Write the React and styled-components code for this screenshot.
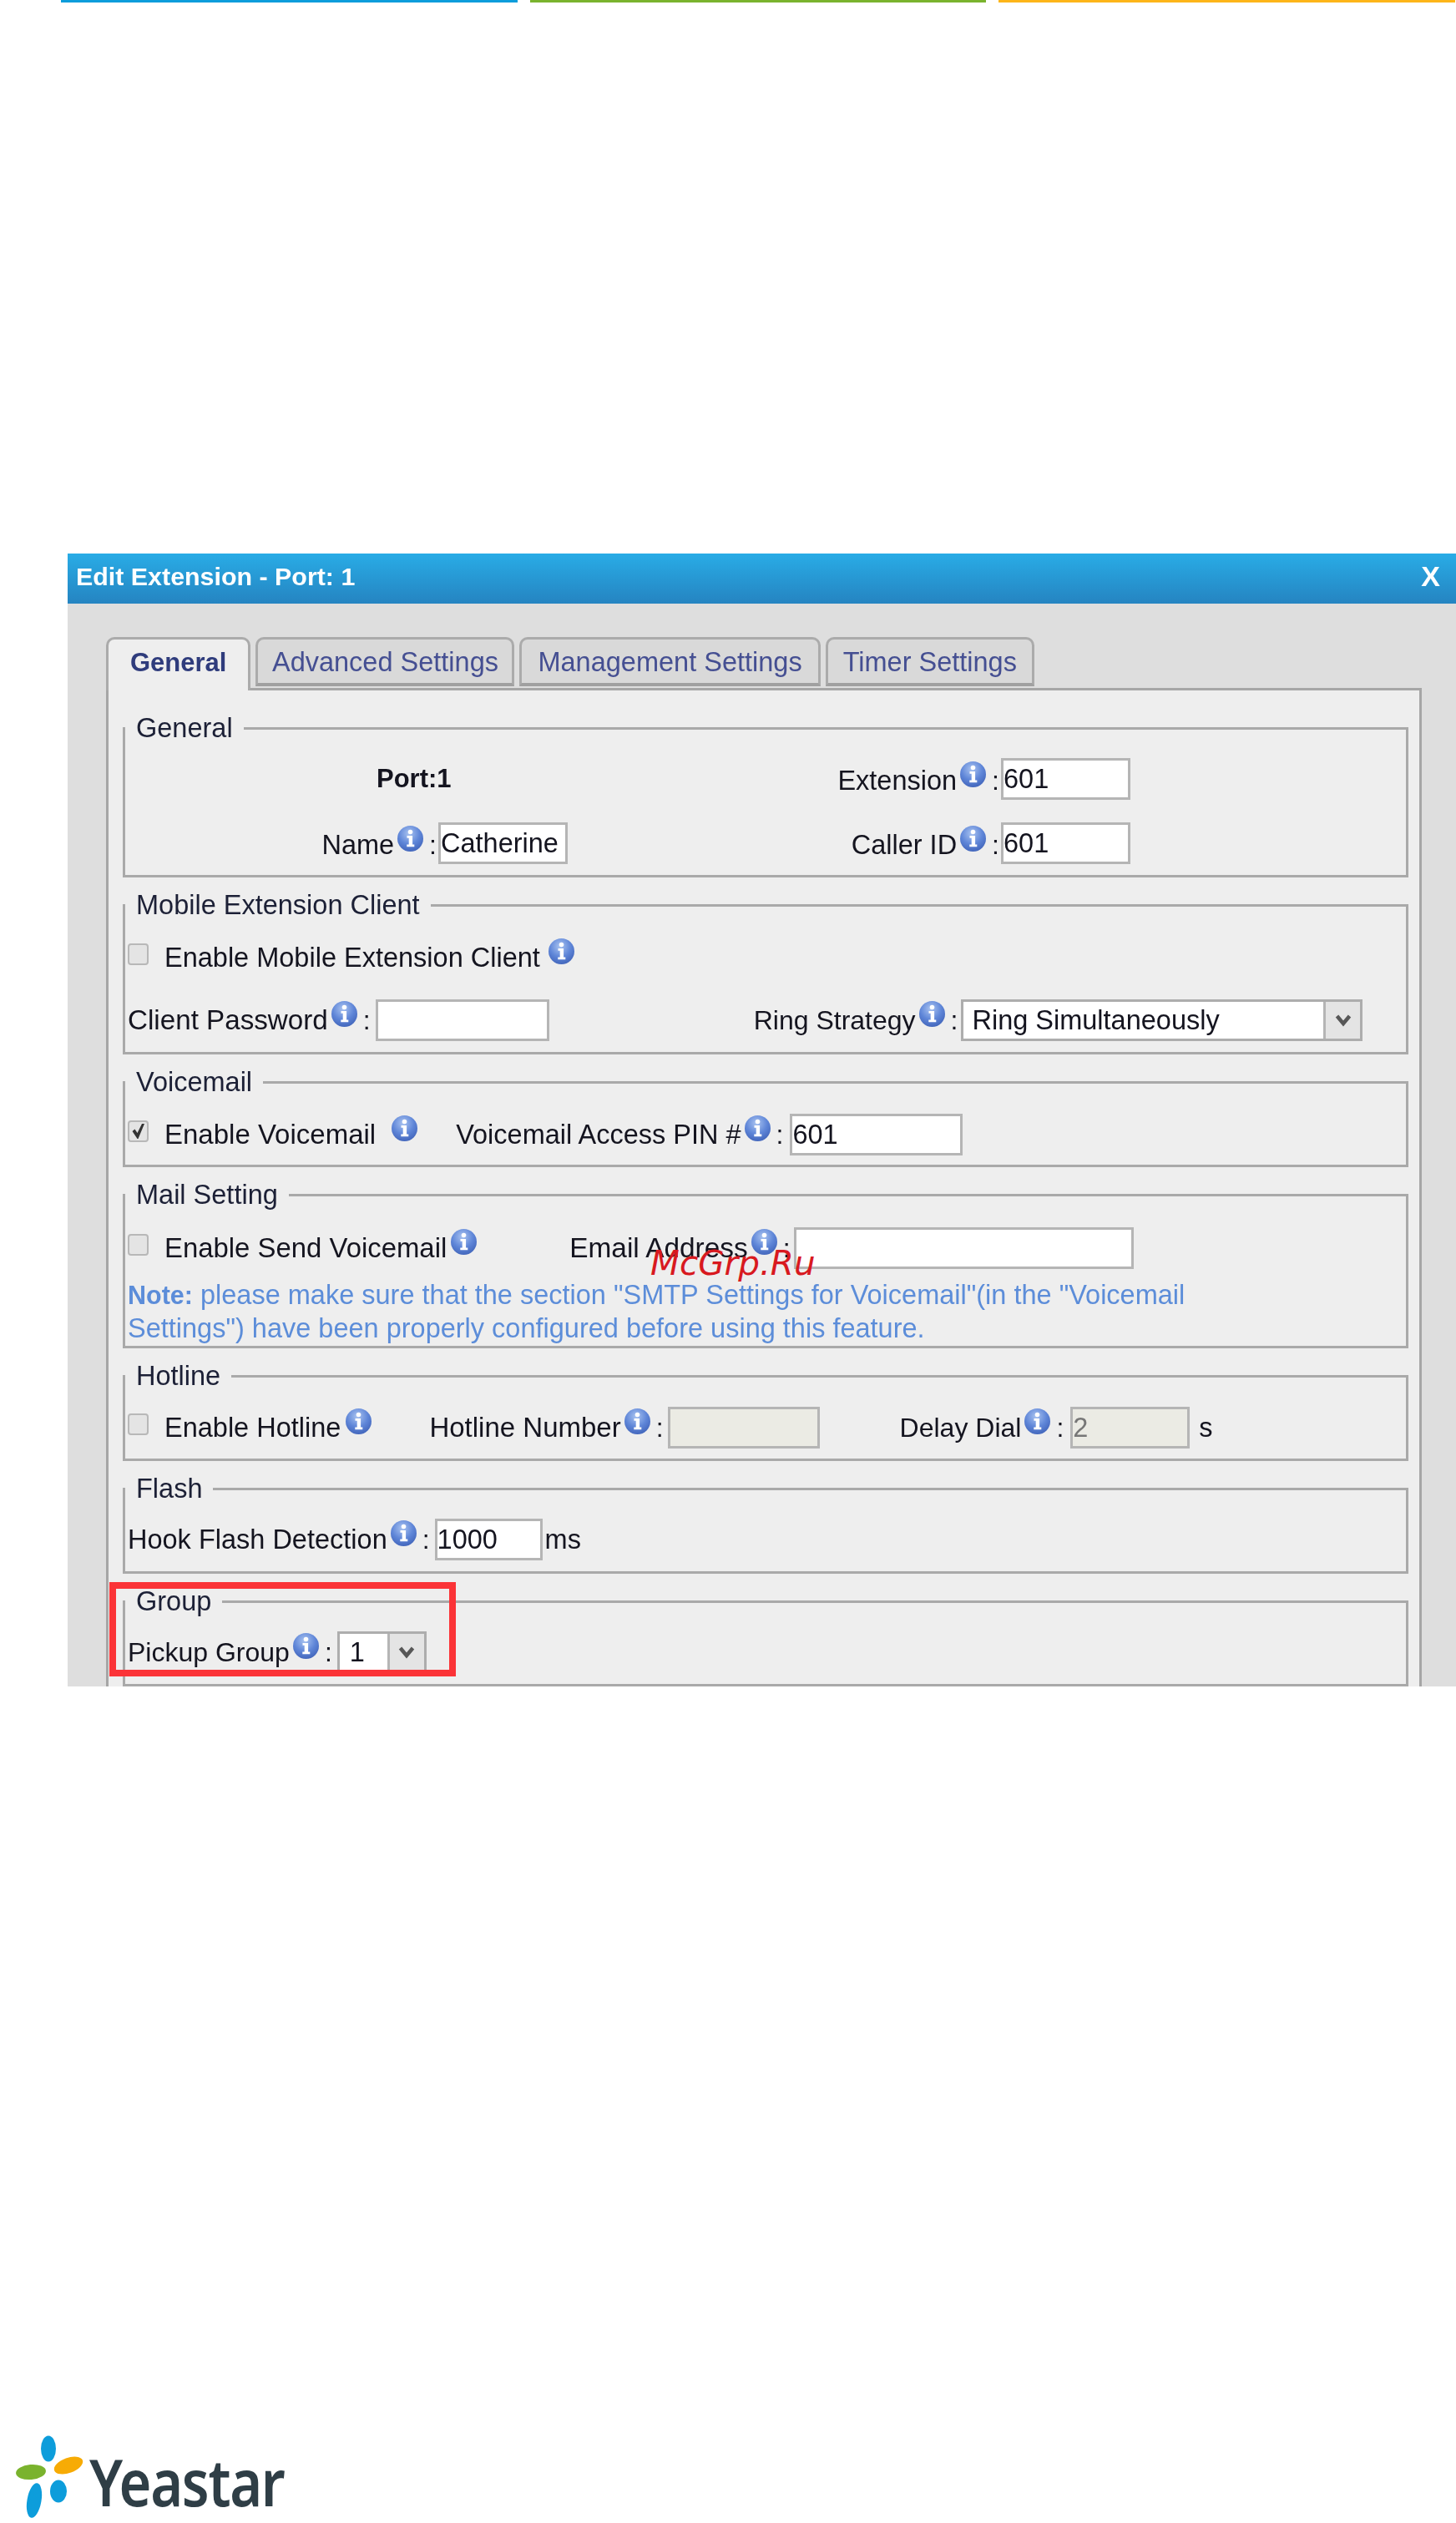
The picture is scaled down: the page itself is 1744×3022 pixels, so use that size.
import React from 'react'
import styled, { createGlobalStyle } from 'styled-components'

const GlobalStyle = createGlobalStyle`
  html, body {
    margin: 0;
    background: #fff;
    font-family: "Liberation Sans", Arial, sans-serif;
  }
`

function InfoIcon() {
  return (
    <InfoSvg viewBox="0 0 33 33">
      <defs>
        <radialGradient id="infoBall" cx="45%" cy="30%" r="75%">
          <stop offset="0%" stopColor="#a9c3f0" />
          <stop offset="55%" stopColor="#5f86d8" />
          <stop offset="100%" stopColor="#3f62b8" />
        </radialGradient>
      </defs>
      <circle cx="16.5" cy="16.5" r="15.5" fill="url(#infoBall)" />
      <circle cx="16.5" cy="8.5" r="2.8" fill="#fff" />
      <path d="M12.5 13h6.6v10.5h2.2v2.8h-9v-2.8h2.4v-7.7h-2.2z" fill="#fff" />
    </InfoSvg>
  )
}

function Arrow() {
  return (
    <svg width="22" height="18" viewBox="0 0 22 18">
      <path d="M3.5 4l7.5 9 7.5-9" fill="none" stroke="#575757" strokeWidth="4.5" />
    </svg>
  )
}

function Hint({ gap }) {
  return (
    <>
      <InfoIcon />
      <Colon>:</Colon>
      <HintGap $w={gap} />
    </>
  )
}

function Check({ checked }) {
  return (
    <CheckBox>
      {checked && (
        <svg width="20" height="20" viewBox="0 0 20 20">
          <path d="M2.5 10l3-2.5 3 4.5L14 1h3L9.5 19h-1z" fill="#333" />
        </svg>
      )}
    </CheckBox>
  )
}

function Select({ value, width, textGap }) {
  return (
    <SelectBox $w={width}>
      <SelectValue $pad={textGap}>{value}</SelectValue>
      <SelectButton><Arrow /></SelectButton>
    </SelectBox>
  )
}

export default function App() {
  return (
    <Page>
      <GlobalStyle />
      <TopBars>
        <TopBar $color="#0d9ddb" $w={547} />
        <TopBar $color="#7ab32e" $w={546} />
        <TopBar $color="#fdb519" $w={547} />
      </TopBars>

      <ModalWrap>
        <Modal>
          <Header>
            <Title>Edit Extension - Port: 1</Title>
            <Close>X</Close>
          </Header>
          <Tabs>
            <Tab $active $pad={26}>General</Tab>
            <Tab $pad={16.5}>Advanced Settings</Tab>
            <Tab $pad={19}>Management Settings</Tab>
            <Tab $pad={18}>Timer Settings</Tab>
          </Tabs>
          <Panel>
            <Section $h={197}>
              <Legend>General</Legend>
              <GeneralGrid>
                <PortLabel>Port:1</PortLabel>
                <RightLabel $col={3}>Extension<Hint gap={2} /></RightLabel>
                <TextInput $w={155} defaultValue="601" />
                <RightLabel>Name<Hint gap={2} /></RightLabel>
                <TextInput $w={155} defaultValue="Catherine" />
                <RightLabel>Caller ID<Hint gap={2} /></RightLabel>
                <TextInput $w={155} defaultValue="601" />
              </GeneralGrid>
            </Section>

            <Section $h={197}>
              <Legend>Mobile Extension Client</Legend>
              <Row $top={20}>
                <Check />
                <CheckText>Enable Mobile Extension Client</CheckText>
                <HintAfter><InfoIcon /></HintAfter>
              </Row>
              <Row $top={25}>
                <FieldText $size={33.2}>Client Password</FieldText>
                <Hint gap={6} />
                <TextInput $w={208} />
                <FieldText $left={245} $size={32}>Ring Strategy</FieldText>
                <Hint gap={4} />
                <Select value="Ring Simultaneously" width={481} textGap={10} />
              </Row>
            </Section>

            <Section $h={120}>
              <Legend>Voicemail</Legend>
              <Row $top={20}>
                <Check checked />
                <CheckText $size={33}>Enable Voicemail</CheckText>
                <HintAfter $left={15}><InfoIcon /></HintAfter>
                <FieldText $left={45}>Voicemail Access PIN #</FieldText>
                <Hint gap={8} />
                <TextInput $w={207} defaultValue="601" />
              </Row>
            </Section>

            <Section $h={202}>
              <Legend>Mail Setting</Legend>
              <Row $top={21}>
                <Check />
                <CheckText $size={32.9}>Enable Send Voicemail</CheckText>
                <HintAfter $left={1}><InfoIcon /></HintAfter>
                <FieldText $left={110} $size={33.4}>Email Address</FieldText>
                <Hint gap={4} />
                <TextInput $w={407} />
              </Row>
              <Note>
                <NoteLead>Note:</NoteLead> please make sure that the section "SMTP Settings for Voicemail"(in the "Voicemail<br />
                Settings") have been properly configured before using this feature.
              </Note>
            </Section>

            <Section $h={120}>
              <Legend>Hotline</Legend>
              <Row $top={19}>
                <Check />
                <CheckText>Enable Hotline</CheckText>
                <HintAfter $left={2}><InfoIcon /></HintAfter>
                <FieldText $left={68} $size={33}>Hotline Number</FieldText>
                <Hint />
                <TextInput $w={182} $disabled disabled />
                <FieldText $left={96} $size={32}>Delay Dial</FieldText>
                <Hint gap={8} />
                <TextInput $w={143} $disabled disabled defaultValue="2" />
                <FieldText $left={11}>s</FieldText>
              </Row>
            </Section>

            <Section $h={120}>
              <Legend>Flash</Legend>
              <Row $top={18}>
                <FieldText>Hook Flash Detection</FieldText>
                <Hint gap={6} />
                <TextInput $w={129} defaultValue="1000" />
                <FieldText $left={3}>ms</FieldText>
              </Row>
            </Section>

            <Section $h={120}>
              <Legend>Group</Legend>
              <Row $top={18}>
                <FieldText $size={32}>Pickup Group</FieldText>
                <Hint gap={6} />
                <Select value="1" width={107} textGap={12} />
              </Row>
            </Section>
          </Panel>
          <RedMark />
        </Modal>
        <Watermark>McGrp.Ru</Watermark>
      </ModalWrap>

      <Footer>
        <svg width="107" height="132" viewBox="0 0 107 132">
          <ellipse cx="58" cy="43" rx="9" ry="15.5" fill="#0d9ddb" />
          <ellipse cx="37" cy="71" rx="18" ry="9" fill="#7ab32e" transform="rotate(-5 37 71)" />
          <ellipse cx="82" cy="63" rx="18" ry="9" fill="#f7ab05" transform="rotate(-20 82 63)" />
          <ellipse cx="70" cy="94" rx="10" ry="13.5" fill="#0d9ddb" />
          <ellipse cx="41" cy="105" rx="8.5" ry="21" fill="#0d9ddb" transform="rotate(10 41 105)" />
        </svg>
        <LogoText>Yeastar</LogoText>
      </Footer>
    </Page>
  )
}

const Page = styled.div`
  width: 1744px;
  height: 3022px;
  background: #fff;
`
const TopBars = styled.div`
  display: flex;
  gap: 15px;
  height: 3px;
  padding-left: 73px;
`
const TopBar = styled.div`
  width: ${(p) => p.$w}px;
  background: ${(p) => p.$color};
`
const ModalWrap = styled.div`
  position: relative;
  margin: 660px 0 0 81px;
`
const Modal = styled.div`
  position: relative;
  height: 1357px;
  overflow: hidden;
  background: #dedede;
  filter: blur(0.5px);
`
const Header = styled.div`
  display: flex;
  align-items: center;
  justify-content: space-between;
  height: 60px;
  padding: 0 19px 6px 10px;
  box-sizing: border-box;
  background: linear-gradient(#29ace6, #2584c1);
  color: #fff;
`
const Title = styled.div`
  font-size: 30.4px;
  font-weight: bold;
`
const Close = styled.div`
  font-size: 34px;
  font-weight: bold;
`
const Tabs = styled.div`
  display: flex;
  gap: 6px;
  margin: 40px 0 0 46px;
  align-items: flex-start;
`
const Tab = styled.div`
  position: relative;
  z-index: 1;
  height: ${(p) => (p.$active ? 64 : 59)}px;
  margin-bottom: ${(p) => (p.$active ? -3 : 0)}px;
  padding: 0 ${(p) => p.$pad}px;
  box-sizing: border-box;
  border: 3px solid #ababab;
  border-bottom: ${(p) => (p.$active ? 'none' : '4px solid #a0a0a0')};
  border-radius: 10px 10px 0 0;
  background: ${(p) => (p.$active ? '#eeeeee' : '#d9d9d9')};
  color: ${(p) => (p.$active ? '#2f3c7c' : '#454f92')};
  font-size: ${(p) => (p.$active ? 31 : 32.5)}px;
  font-weight: ${(p) => (p.$active ? 'bold' : 'normal')};
  line-height: 55px;
  white-space: nowrap;
`
const Panel = styled.div`
  display: flex;
  flex-direction: column;
  gap: 15px;
  margin: 0 41px 0 46px;
  min-height: 1300px;
  padding: 27px 13px 0 17px;
  box-sizing: border-box;
  border: 3px solid #a6a6a6;
  background: #eeeeee;
`
const Section = styled.fieldset`
  flex: none;
  height: ${(p) => p.$h}px;
  margin: 0;
  padding: 0;
  box-sizing: border-box;
  border: 3px solid #a9a9a9;
  min-width: 0;
`
const Legend = styled.legend`
  margin: 0;
  padding: 0 13px;
  font-size: 32.5px;
  line-height: 36px;
  color: #1c2036;
`
const GeneralGrid = styled.div`
  display: grid;
  grid-template-columns: 375px 155px 519px 155px;
  grid-auto-rows: 50px;
  row-gap: 27px;
  align-items: center;
  padding-top: 18px;
`
const PortLabel = styled.div`
  grid-column: 1 / span 2;
  padding-left: 301px;
  font-size: 31px;
  font-weight: bold;
  color: #14141f;
`
const RightLabel = styled.div`
  grid-column: ${(p) => p.$col || 'auto'};
  display: flex;
  align-items: center;
  justify-content: flex-end;
  padding-top: 4px;
  font-size: 32.5px;
  color: #14141f;
`
const Row = styled.div`
  display: flex;
  align-items: center;
  height: 50px;
  margin-top: ${(p) => p.$top}px;
  padding-left: 3px;
`
const FieldText = styled.span`
  margin-left: ${(p) => p.$left || 0}px;
  font-size: ${(p) => p.$size || 32.5}px;
  color: #14141f;
  white-space: nowrap;
`
const CheckText = styled(FieldText)`
  margin-left: 19px;
`
const HintAfter = styled.span`
  display: flex;
  margin-left: ${(p) => p.$left || 6}px;
`
const InfoSvg = styled.svg`
  flex: none;
  width: 33px;
  height: 33px;
  margin: 0 0 16px 3px;
`
const Colon = styled.span`
  margin-left: 6px;
  font-size: 32px;
  color: #14141f;
`
const HintGap = styled.span`
  flex: none;
  width: ${(p) => p.$w ?? 5}px;
`
const CheckBox = styled.span`
  flex: none;
  display: flex;
  align-items: center;
  justify-content: center;
  width: 25px;
  height: 26px;
  margin-bottom: 9px;
  box-sizing: border-box;
  border: 2px solid #b8b8b8;
  border-radius: 4px;
  background: #e4e4e4;
`
const TextInput = styled.input.attrs({ readOnly: true })`
  flex: none;
  width: ${(p) => p.$w}px;
  height: 50px;
  padding: 0;
  box-sizing: border-box;
  border: 3px solid #b5b5b5;
  border-radius: 0;
  outline: none;
  background: ${(p) => (p.$disabled ? '#ebebe4' : '#fff')};
  color: ${(p) => (p.$disabled ? '#777' : '#14141f')};
  font-family: inherit;
  font-size: 32.5px;
`
const SelectBox = styled.div`
  flex: none;
  display: flex;
  width: ${(p) => p.$w}px;
  height: 50px;
  box-sizing: border-box;
  border: 3px solid #adadad;
  background: #fff;
`
const SelectValue = styled.div`
  flex: 1;
  padding-left: ${(p) => p.$pad}px;
  font-size: 32.5px;
  line-height: 44px;
  color: #14141f;
  white-space: nowrap;
`
const SelectButton = styled.div`
  flex: none;
  display: flex;
  align-items: center;
  justify-content: center;
  width: 41px;
  border-left: 3px solid #b5b5b5;
  background: #e4e4e4;
`
const Note = styled.div`
  margin-top: 11px;
  padding-left: 3px;
  font-size: 32.5px;
  line-height: 40px;
  color: #5c8dd9;
  white-space: nowrap;
`
const NoteLead = styled.b`
  font-size: 30.5px;
`
const RedMark = styled.div`
  position: absolute;
  left: 50px;
  top: 1232px;
  width: 415px;
  height: 113px;
  box-sizing: border-box;
  border: 8px solid #fb3337;
`
const Watermark = styled.div`
  position: absolute;
  left: 698px;
  top: 826px;
  font-family: "DejaVu Sans", sans-serif;
  font-size: 40.5px;
  font-style: italic;
  line-height: 48px;
  color: #d8191f;
`
const Footer = styled.div`
  display: flex;
  margin-top: 870px;
  height: 132px;
`
const LogoText = styled.div`
  padding-top: 30px;
  height: 102px;
  font-family: "Noto Sans", sans-serif;
  font-size: 77px;
  font-weight: 600;
  line-height: 106px;
  letter-spacing: -1.5px;
  color: #2f3e46;
  transform: scaleX(0.865);
  transform-origin: left center;
`
